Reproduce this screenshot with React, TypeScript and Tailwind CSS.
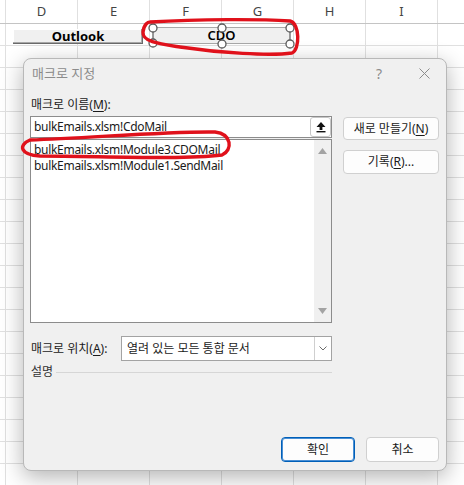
import React from "react";

const COLS = ["D", "E", "F", "G", "H", "I"];
const ROWS = Array.from({ length: 21 }, (_, i) => i);

const FONT = "[font-family:'Noto_Sans','Noto_Sans_CJK_KR',sans-serif]";

function GridRow({ header }: { header?: boolean }) {
  return (
    <div
      className={
        header
          ? "flex h-[24px] border-b border-[#c4c4c4]"
          : "flex h-[22px] border-b border-[#e0e0e0]"
      }
    >
      <div className="w-[6px] shrink-0 border-r border-[#e0e0e0]" />
      {COLS.map((c) => (
        <div
          key={c}
          className="w-[72px] shrink-0 border-r border-[#e0e0e0] flex items-center justify-center text-[13px] text-[#444]"
        >
          {header ? c : null}
        </div>
      ))}
      <div className="flex-1" />
    </div>
  );
}

function Handle({ x, y }: { x: number; y: number }) {
  return <circle cx={x} cy={y} r={4} fill="#fff" stroke="#5a5a5a" strokeWidth={1.3} />;
}

function UploadArrow() {
  return (
    <svg width="12" height="12" viewBox="0 0 12 12">
      <path d="M6 1 L10.5 6 H7.4 V9 H4.6 V6 H1.5 Z" fill="#111" />
      <rect x="1.5" y="10" width="9" height="1.4" fill="#111" />
    </svg>
  );
}

function Btn({ children, primary }: { children: React.ReactNode; primary?: boolean }) {
  return (
    <button
      className={
        primary
          ? "w-full h-full rounded-[4px] bg-[#fdfdfd] border border-[#005fb8] shadow-[inset_0_0_0_1px_#4a8fd4] text-[12px] text-[#1a1a1a]"
          : "w-full h-full rounded-[4px] bg-[#fdfdfd] border border-[#d0d0d0] text-[12px] text-[#1a1a1a]"
      }
    >
      {children}
    </button>
  );
}

export default function App() {
  return (
    <div className={`relative w-[464px] h-[485px] overflow-hidden bg-white ${FONT}`}>
      {/* sheet grid */}
      <GridRow header />
      {ROWS.map((r) => (
        <GridRow key={r} />
      ))}

      {/* form buttons on the sheet */}
      <div className="absolute left-[13px] top-[29px] w-[130px] h-[15px] bg-[#f0f0f0] shadow-[inset_-1px_-1px_0_#6a6a6a,inset_-2px_-2px_0_#a8a8a8,inset_1px_1px_0_#ffffff] flex items-center justify-center text-[13px] font-bold text-black leading-none">
        Outlook
      </div>
      <div className="absolute left-[153px] top-[27px] w-[137px] h-[17px] bg-[#f0f0f0] border-y border-[#a8a8a8] flex items-center justify-center text-[13px] font-semibold text-black leading-none">
        CDO
      </div>

      {/* dialog */}
      <div className="absolute left-[23px] top-[58px] w-[424px] h-[413px] rounded-[8px] border border-[#b8b8b8] bg-[#f0f0f0] shadow-[0_6px_22px_rgba(0,0,0,0.3)] flex flex-col text-[12px] text-[#1a1a1a]">
        <div className="h-[29px] flex items-center pl-[8px] pr-[16px]">
          <span className="text-[13px] text-[#8c8c8c]">매크로 지정</span>
          <span className="ml-auto mr-[37px] text-[14px] text-[#8c8c8c]">?</span>
          <svg width="11" height="11" viewBox="0 0 11 11">
            <path d="M0.5 0.5 L10.5 10.5 M10.5 0.5 L0.5 10.5" stroke="#8c8c8c" strokeWidth="1" />
          </svg>
        </div>

        <div className="flex px-[6px] pt-[8px] gap-[11px]">
          <div className="w-[302px] flex flex-col">
            <div className="h-[17px] leading-[17px] pl-[1px]">
              매크로 이름(<u className="underline-offset-2">M</u>):
            </div>
            <div className="mt-[3px] h-[22px] bg-white border border-[#8c8c8c] flex items-center">
              <span className="pl-[3px] tracking-[-0.3px]">bulkEmails.xlsm!CdoMail</span>
              <div className="ml-auto w-[21px] h-[20px] rounded-[3px] border border-[#c6c6c6] bg-white flex items-center justify-center">
                <UploadArrow />
              </div>
            </div>
            <div className="mt-[1px] h-[184px] bg-white border border-[#8c8c8c] flex">
              <div className="flex-1 pl-[3px] pt-[2px] tracking-[-0.3px] leading-[16px]">
                <div>bulkEmails.xlsm!Module3.CDOMail</div>
                <div>bulkEmails.xlsm!Module1.SendMail</div>
              </div>
              <div className="w-[17px] bg-[#f0f0f0] flex flex-col items-center justify-between py-[8px]">
                <svg width="9" height="6" viewBox="0 0 9 6">
                  <path d="M4.5 0 L9 6 H0 Z" fill="#a3a3a3" />
                </svg>
                <svg width="9" height="6" viewBox="0 0 9 6">
                  <path d="M0 0 H9 L4.5 6 Z" fill="#a3a3a3" />
                </svg>
              </div>
            </div>
            <div className="mt-[13px] h-[25px] flex items-center">
              <div className="w-[91px] pl-[1px]">
                매크로 위치(<u className="underline-offset-2">A</u>):
              </div>
              <div className="flex-1 h-full bg-white border border-[#a3a3a3] flex items-center">
                <span className="pl-[5px]">열려 있는 모든 통합 문서</span>
                <div className="ml-auto w-[17px] h-[23px] border-l border-[#cfcfcf] flex items-center justify-center">
                  <svg width="8" height="5" viewBox="0 0 8 5">
                    <path d="M0.5 0.5 L4 4 L7.5 0.5" fill="none" stroke="#6b6b6b" strokeWidth="1" />
                  </svg>
                </div>
              </div>
            </div>
            <div className="mt-[3px] h-[16px] flex items-center">
              <span className="pl-[1px] text-[#333]">설명</span>
              <div className="flex-1 h-px bg-[#d6d6d6] ml-[3px]" />
            </div>
          </div>

          <div className="w-[96px] flex flex-col">
            <div className="mt-[21px] h-[23px]">
              <Btn>
                새로 만들기(<u className="underline-offset-2">N</u>)
              </Btn>
            </div>
            <div className="mt-[10px] h-[24px]">
              <Btn>
                기록(<u className="underline-offset-2">R</u>)...
              </Btn>
            </div>
          </div>
        </div>

        <div className="mt-auto flex justify-end gap-[11px] pr-[7px] pb-[8px]">
          <div className="w-[74px] h-[25px]">
            <Btn primary>확인</Btn>
          </div>
          <div className="w-[73px] h-[25px]">
            <Btn>취소</Btn>
          </div>
        </div>
      </div>

      {/* selection handles + red annotations */}
      <svg className="absolute left-0 top-0 pointer-events-none" width="464" height="485">
        <path d="M153 28 V44 M290 28 V44" stroke="#5a5a5a" strokeWidth="1.2" />
        <Handle x={153} y={28} />
        <Handle x={222} y={28} />
        <Handle x={290} y={28} />
        <Handle x={153} y={43} />
        <Handle x={222} y={44} />
        <Handle x={290} y={44} />
        <path
          d="M150 22 C200 19 260 19 290 21 C300 23 300 50 292 53 C270 56 220 53 180 47 C160 44 142 42 143 32 C144 24 148 22 150 22 Z"
          fill="none"
          stroke="#e0111b"
          strokeWidth="3.4"
          strokeLinejoin="round"
        />
        <path
          d="M30 140 C90 138 170 131 215 132 C232 134 233 150 222 155 C180 160 100 156 40 156 C20 155 18 145 30 140 Z"
          fill="none"
          stroke="#e0111b"
          strokeWidth="3.4"
          strokeLinejoin="round"
        />
      </svg>
    </div>
  );
}
